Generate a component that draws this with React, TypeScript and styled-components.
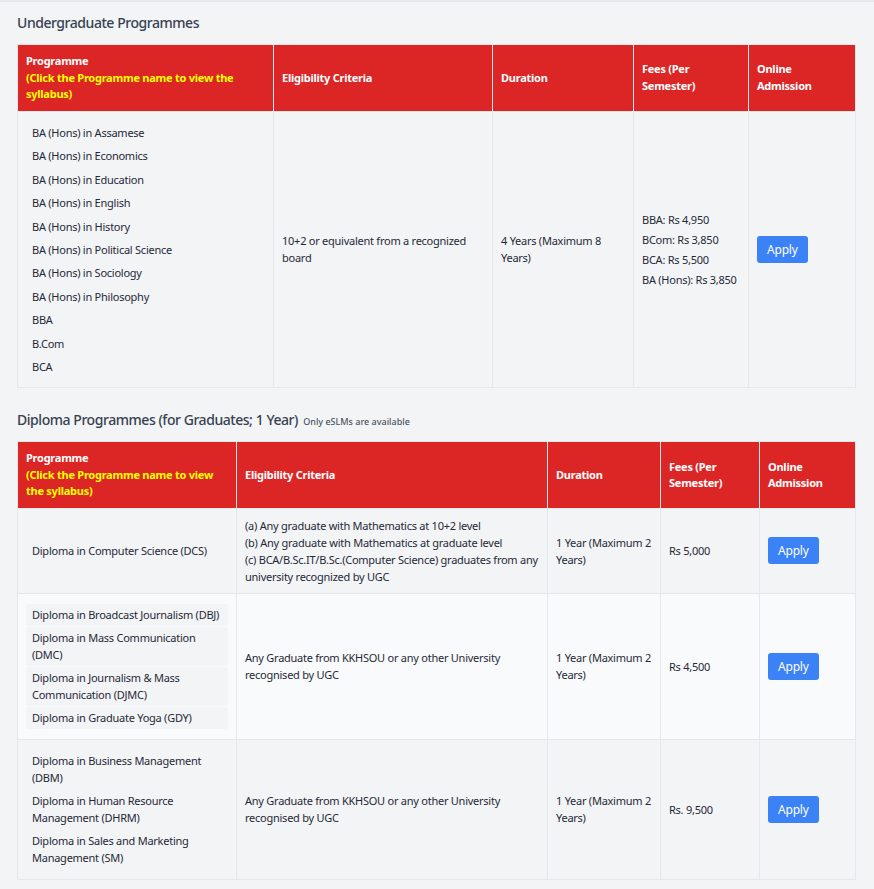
import React from 'react';
import styled, { createGlobalStyle } from 'styled-components';

const Global = createGlobalStyle`
  html, body { margin: 0; padding: 0; background: #f3f4f6; }
  body { font-family: "Noto Sans", "Open Sans", sans-serif; color: #1f2937; }
`;

const Page = styled.div`
  border-top: 2px solid #e5e7eb;
  padding: 10px 19px 10px 17px;
`;

const Section = styled.section`
  & + & { margin-top: 21px; }
`;

const Heading = styled.h2`
  margin: 0 0 10px;
  font-size: 14px;
  line-height: 22px;
  height: 22px;
  font-weight: 500;
  letter-spacing: -0.45px;
  color: #374151;
`;

const Note = styled.span`
  font-size: 9px;
  line-height: 1;
  font-weight: 500;
  letter-spacing: 0;
  color: #4b5563;
  margin-left: 2px;
`;

const Table = styled.table`
  width: 100%;
  table-layout: fixed;
  border-collapse: collapse;
  font-size: 11px;
  line-height: 17px;
  letter-spacing: -0.25px;
`;

const Th = styled.th`
  background: #dc2626;
  color: #ffffff;
  font-weight: 700;
  text-align: left;
  vertical-align: middle;
  padding: 8px 8px;
  border: 1px solid #e5e7eb;
  line-height: 16.5px;
`;

const Hint = styled.span`
  display: block;
  color: #ffff00;
`;

const Row = styled.tr<{ $alt?: boolean }>`
  background: ${(p) => (p.$alt ? '#f9fafb' : '#f3f4f6')};
`;

const Td = styled.td`
  border: 1px solid #e5e7eb;
  padding: 8px 8px;
  vertical-align: middle;
  color: #1f2937;
`;

const List = styled.ul<{ $gap?: number }>`
  list-style: none;
  margin: 0;
  padding: 2px 0;
  display: flex;
  flex-direction: column;
  gap: ${(p) => p.$gap ?? 1}px;
`;

const Item = styled.li`
  background: #f3f4f6;
  border-radius: 3px;
  padding: 2.5px 6px;
`;

const FeeList = styled.div`
  display: flex;
  flex-direction: column;
  gap: 3px;
`;

const ApplyButton = styled.button`
  background: #3b82f6;
  color: #ffffff;
  border: none;
  border-radius: 3px;
  font-family: inherit;
  font-size: 12px;
  letter-spacing: -0.2px;
  height: 27px;
  padding: 0 10px;
  cursor: pointer;
`;

const ugProgrammes = [
  'BA (Hons) in Assamese',
  'BA (Hons) in Economics',
  'BA (Hons) in Education',
  'BA (Hons) in English',
  'BA (Hons) in History',
  'BA (Hons) in Political Science',
  'BA (Hons) in Sociology',
  'BA (Hons) in Philosophy',
  'BBA',
  'B.Com',
  'BCA',
];

const ugFees = ['BBA: Rs 4,950', 'BCom: Rs 3,850', 'BCA: Rs 5,500', 'BA (Hons): Rs 3,850'];

type DiplomaRow = {
  programmes: string[];
  eligibility: string[];
  duration: string;
  fee: string;
};

const diplomaRows: DiplomaRow[] = [
  {
    programmes: ['Diploma in Computer Science (DCS)'],
    eligibility: [
      '(a) Any graduate with Mathematics at 10+2 level',
      '(b) Any graduate with Mathematics at graduate level',
      '(c) BCA/B.Sc.IT/B.Sc.(Computer Science) graduates from any university recognized by UGC',
    ],
    duration: '1 Year (Maximum 2 Years)',
    fee: 'Rs 5,000',
  },
  {
    programmes: [
      'Diploma in Broadcast Journalism (DBJ)',
      'Diploma in Mass Communication (DMC)',
      'Diploma in Journalism & Mass Communication (DJMC)',
      'Diploma in Graduate Yoga (GDY)',
    ],
    eligibility: ['Any Graduate from KKHSOU or any other University recognised by UGC'],
    duration: '1 Year (Maximum 2 Years)',
    fee: 'Rs 4,500',
  },
  {
    programmes: [
      'Diploma in Business Management (DBM)',
      'Diploma in Human Resource Management (DHRM)',
      'Diploma in Sales and Marketing Management (SM)',
    ],
    eligibility: ['Any Graduate from KKHSOU or any other University recognised by UGC'],
    duration: '1 Year (Maximum 2 Years)',
    fee: 'Rs. 9,500',
  },
];

const Header: React.FC<{ widths: number[] }> = ({ widths }) => (
  <>
    <colgroup>
      {widths.map((w, i) => (
        <col key={i} style={{ width: w }} />
      ))}
    </colgroup>
    <thead>
      <tr>
        <Th>
          Programme
          <Hint>(Click the Programme name to view the syllabus)</Hint>
        </Th>
        <Th>Eligibility Criteria</Th>
        <Th>Duration</Th>
        <Th>Fees (Per Semester)</Th>
        <Th>Online Admission</Th>
      </tr>
    </thead>
  </>
);

export default function App() {
  return (
    <>
      <Global />
      <Page>
        <Section>
          <Heading>Undergraduate Programmes</Heading>
          <Table>
            <Header widths={[256, 219, 141, 115, 107]} />
            <tbody>
              <Row>
                <Td>
                  <List $gap={1.4}>
                    {ugProgrammes.map((p) => (
                      <Item key={p}>{p}</Item>
                    ))}
                  </List>
                </Td>
                <Td>10+2 or equivalent from a recognized board</Td>
                <Td>4 Years (Maximum 8 Years)</Td>
                <Td>
                  <FeeList>
                    {ugFees.map((f) => (
                      <span key={f}>{f}</span>
                    ))}
                  </FeeList>
                </Td>
                <Td>
                  <ApplyButton>Apply</ApplyButton>
                </Td>
              </Row>
            </tbody>
          </Table>
        </Section>
        <Section>
          <Heading>
            Diploma Programmes (for Graduates; 1 Year) <Note>Only eSLMs are available</Note>
          </Heading>
          <Table>
            <Header widths={[219, 311, 113, 99, 96]} />
            <tbody>
              {diplomaRows.map((r, i) => (
                <Row key={i} $alt={i % 2 === 1}>
                  <Td>
                    <List>
                      {r.programmes.map((p) => (
                        <Item key={p}>{p}</Item>
                      ))}
                    </List>
                  </Td>
                  <Td>
                    {r.eligibility.map((e) => (
                      <div key={e}>{e}</div>
                    ))}
                  </Td>
                  <Td>{r.duration}</Td>
                  <Td>{r.fee}</Td>
                  <Td>
                    <ApplyButton>Apply</ApplyButton>
                  </Td>
                </Row>
              ))}
            </tbody>
          </Table>
        </Section>
      </Page>
    </>
  );
}
